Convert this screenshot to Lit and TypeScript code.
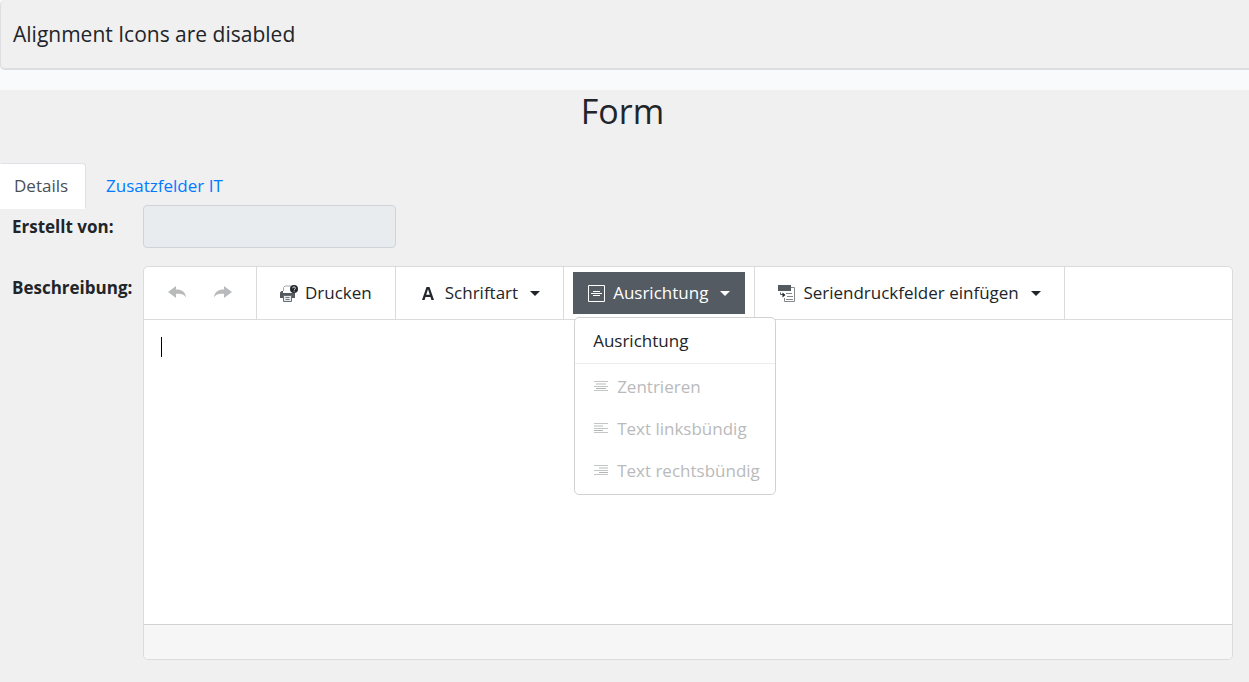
import { LitElement, html, css, svg } from "lit";
import { customElement } from "lit/decorators.js";

const undoIcon = svg`<path d="M0 6 8 0v3.500c6 0 9.500 2.500 10 8-2-3-4.500-3.800-10-3.600V12Z" fill="#b9babb"/>`;
const redoIcon = svg`<path d="M18 6 10 0v3.500C4 3.500.5 6 0 11.500c2-3 4.500-3.800 10-3.600V12Z" fill="#b9babb"/>`;

const printIcon = svg`
  <path d="M3.500 6V2.500L5 1h6" fill="none" stroke="#a5a7a9"/>
  <path d="M0 7.500 1.500 6H3v2h8.500l3-1 .5 1v5h-3v-2H3v2H0Z" fill="#555a5f"/>
  <path d="M3.500 10.500h8v6h-8Z" fill="#e8e9ea" stroke="#6a6e72"/>
  <path d="M5.500 12.500h4M5.500 14.500h4" stroke="#777b7f"/>
  <circle cx="14" cy="4" r="4" fill="#24282c"/>
  <path d="M12.600 3.200c0-1.800 2.900-1.800 2.900 0 0 .9-1.400 1-1.400 1.800M14.100 5.700v1" fill="none" stroke="#d8d9da"/>`;

const fontIcon = svg`<path d="M0 13 4.500 0h3L12 13H9.400l-.9-3h-5l-.9 3ZM4.200 7.800h3.600L6 2.300Z" fill="#24282c" fill-rule="evenodd"/>`;

const alignBoxIcon = svg`
  <path d="M.5.500h16v16H.5Z" fill="none" stroke="#fff"/>
  <path d="M5 6.500h7M3 8.500h11M5 10.500h7" stroke="#fff"/>`;

const mergeIcon = svg`
  <path d="M0 0h13v6H0Z" fill="#555a5f"/>
  <path d="M13 2.500h3.500v14h-10V13" fill="none" stroke="#85898c"/>
  <path d="M2.500 7.500v2H5" fill="none" stroke="#555a5f"/>
  <path d="M4.500 7.500 7.500 10l-3 2.500Z" fill="#24282c"/>
  <path d="M8 8.500h6M9 11.500h6M8 14.500h7" stroke="#85898c"/>`;

const lineIcon = (x: number, width: number) => svg`
  <path d="M0 .5h14M0 5.500h14M0 9.500h14" stroke="#c4c5c6"/>
  <rect x=${x} y="2" width=${width} height="2" fill="#dcdddd"/>
  <rect x=${x} y="7" width=${width} height="1" fill="#b4b5b6"/>`;

const alignments = [
  { label: "Zentrieren", icon: lineIcon(2, 10) },
  { label: "Text linksbündig", icon: lineIcon(0, 9) },
  { label: "Text rechtsbündig", icon: lineIcon(5, 9) },
];

@customElement("app-root")
export class AppRoot extends LitElement {
  static styles = css`
    :host {
      display: block;
      min-height: 100vh;
      background: #f0f0f0;
      color: #212529;
      font: 17px/26px "Segoe UI", "Open Sans", sans-serif;
    }
    * { box-sizing: border-box; }
    svg { display: block; flex: none; overflow: visible; }
    button, input, textarea { font: inherit; color: inherit; margin: 0; }
    button { border: 0; background: none; cursor: pointer; }
    .banner-area { background: #f8fafc; padding-bottom: 20px; }
    .banner {
      background: #f0f0f0;
      border: 1px solid #dcdedf;
      border-width: 0 0 2px 1px;
      border-radius: 5px 0 0 5px;
      padding: 20px 12px;
      font-size: 21px;
      line-height: 28px;
    }
    h1 { margin: 0; text-align: center; font-size: 34px; font-weight: 400; line-height: 42px; padding-right: 4px; }
    .tabs { display: flex; margin-top: 31px; height: 46px; }
    .tab { padding: 9px 19px; color: #007bff; text-decoration: none; border: 1px solid transparent; }
    .tab.active {
      color: #495057;
      background: #fff;
      border-color: #dee2e6 #dee2e6 #fff transparent;
      border-radius: 0 4px 0 0;
      padding: 9px 17px 9px 13px;
    }
    .fields {
      display: grid;
      grid-template-columns: 119px 1fr;
      column-gap: 12px;
      row-gap: 18px;
      padding: 0 16px 22px 12px;
      margin-top: -4px;
    }
    .label { font-weight: 700; padding-top: 9px; white-space: nowrap; }
    .creator { width: 253px; height: 43px; background: #e9ecef; border: 1px solid #ced4da; border-radius: 4px; padding: 6px 12px; }
    .editor { border: 1px solid #dbdbdb; border-radius: 5px; background: #fff; min-width: 0; }
    .toolbar { display: flex; height: 53px; border-bottom: 1px solid #dbdbdb; }
    .group { display: flex; align-items: center; border-right: 1px solid #dbdbdb; position: relative; padding: 0 9px; }
    .group.first { padding: 0 10px; }
    .tool { display: flex; align-items: center; gap: 8px; height: 42px; padding: 0 14px; white-space: nowrap; }
    .tool.font { padding-left: 17px; }
    .tool.open { background: #545b62; color: #fff; padding: 0 15px; }
    .caret { border: 5px solid transparent; border-top-color: currentColor; border-bottom: 0; margin-left: 4px; }
    .menu {
      position: absolute;
      top: 50px;
      left: 10px;
      z-index: 1;
      background: #fff;
      border: 1px solid #d2d2d2;
      border-radius: 5px;
      padding-bottom: 2px;
      width: 202px;
    }
    .menu-title { padding: 10px 18px 9px; border-bottom: 1px solid #ececec; margin-bottom: 2px; }
    .item { display: flex; align-items: center; gap: 9px; width: 100%; height: 42px; padding: 0 18px 0 19px; color: #b9babb; white-space: nowrap; cursor: default; }
    .content-area { position: relative; }
    .content { display: block; width: 100%; height: 304px; border: 0; outline: 0; resize: none; padding: 14px 17px; background: none; caret-color: transparent; }
    .cursor { position: absolute; left: 17px; top: 17px; width: 1px; height: 20px; background: #000; }
    .content:not(:placeholder-shown) + .cursor { display: none; }
    .status { height: 35px; background: #f6f6f6; border-top: 1px solid #d2d2d2; border-radius: 0 0 5px 5px; }
  `;

  render() {
    return html`
      <header class="banner-area"><div class="banner">Alignment Icons are disabled</div></header>
      <main>
        <h1>Form</h1>
        <nav class="tabs">
          <a class="tab active" href="#details">Details</a>
          <a class="tab" href="#zusatz">Zusatzfelder IT</a>
        </nav>
        <form class="fields">
          <label class="label" for="creator">Erstellt von:</label>
          <input class="creator" id="creator" type="text" readonly />
          <label class="label" for="description">Beschreibung:</label>
          <div class="editor">
            <div class="toolbar" role="toolbar">
              <div class="group first">
                <button class="tool" type="button" disabled aria-label="Rückgängig"><svg width="18" height="14">${undoIcon}</svg></button>
                <button class="tool" type="button" disabled aria-label="Wiederholen"><svg width="18" height="14">${redoIcon}</svg></button>
              </div>
              <div class="group">
                <button class="tool" type="button"><svg width="17" height="17">${printIcon}</svg>Drucken</button>
              </div>
              <div class="group">
                <button class="tool font" type="button"><svg width="15" height="13">${fontIcon}</svg>Schriftart<span class="caret"></span></button>
              </div>
              <div class="group">
                <button class="tool open" type="button" aria-expanded="true"><svg width="17" height="17">${alignBoxIcon}</svg>Ausrichtung<span class="caret"></span></button>
                <div class="menu" role="menu">
                  <div class="menu-title">Ausrichtung</div>
                  ${alignments.map(
                    (a) => html`<button class="item" type="button" role="menuitem" disabled><svg width="14" height="12">${a.icon}</svg>${a.label}</button>`
                  )}
                </div>
              </div>
              <div class="group">
                <button class="tool" type="button"><svg width="17" height="17">${mergeIcon}</svg>Seriendruckfelder einfügen<span class="caret"></span></button>
              </div>
            </div>
            <div class="content-area">
              <textarea class="content" id="description" placeholder=" "></textarea>
              <span class="cursor"></span>
            </div>
            <div class="status"></div>
          </div>
        </form>
      </main>
    `;
  }
}
